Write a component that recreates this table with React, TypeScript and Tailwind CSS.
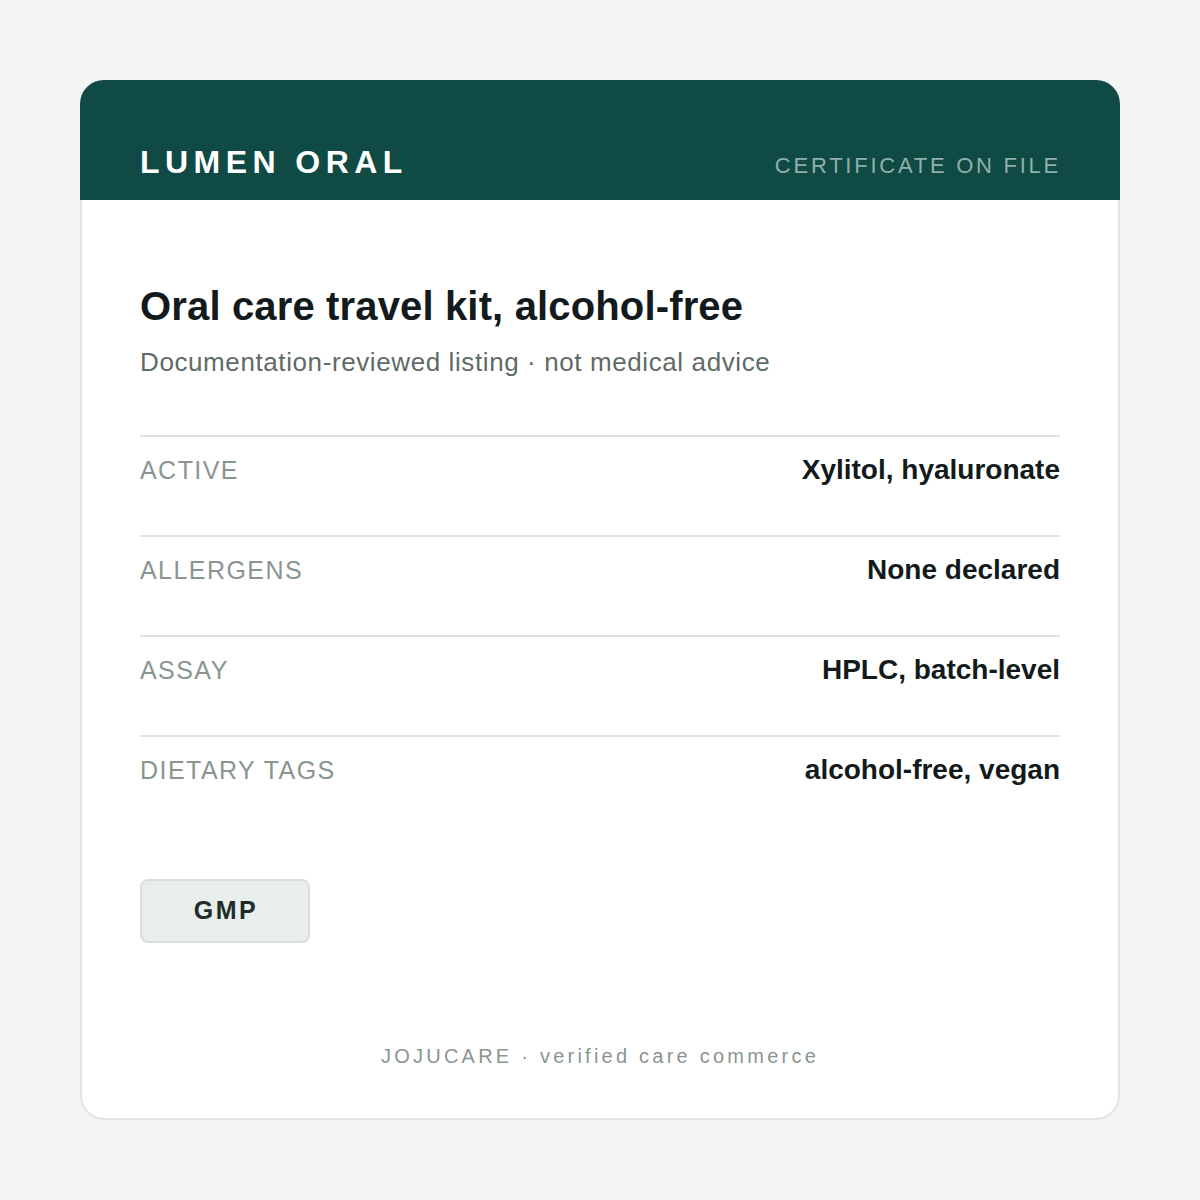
import React from "react";

const rows = [
  { label: "ACTIVE", value: "Xylitol, hyaluronate" },
  { label: "ALLERGENS", value: "None declared" },
  { label: "ASSAY", value: "HPLC, batch-level" },
  { label: "DIETARY TAGS", value: "alcohol-free, vegan" },
];

export default function App() {
  return (
    <div
      className="min-h-[1200px] w-[1200px] bg-[#f4f4f2] p-[80px]"
      style={{ fontFamily: '"Liberation Sans", Arial, sans-serif' }}
    >
      <div className="flex h-[1040px] w-[1040px] flex-col overflow-hidden rounded-[24px]">
        <div className="flex h-[120px] items-baseline justify-between bg-[#0f4a45] px-[60px] pt-[62px]">
          <div className="text-[32px] font-bold leading-[40px] tracking-[0.17em] text-white">
            LUMEN ORAL
          </div>
          <div className="-mr-[1px] text-[22px] leading-[28px] tracking-[0.125em] text-[#8fb0aa]">
            CERTIFICATE ON FILE
          </div>
        </div>
        <div className="flex flex-1 flex-col rounded-b-[24px] border-x-2 border-b-2 border-[#dfe3e1] bg-white px-[58px] pt-[82px]">
          <h1 className="text-[40px] font-bold leading-[48px] tracking-[0.15px] text-[#121a1c]">
            Oral care travel kit, alcohol-free
          </h1>
          <p className="mt-[16px] text-[26px] leading-[32px] tracking-[0.6px] text-[#5f6b66]">
            Documentation-reviewed listing · not medical advice
          </p>
          <div className="mt-[57px] flex flex-col">
            {rows.map((r) => (
              <div
                key={r.label}
                className="flex h-[100px] items-start justify-between border-t-2 border-[#dfe2e0] pt-[18px]"
              >
                <span className="text-[25px] leading-[30px] tracking-[1.45px] text-[#8a9590]">
                  {r.label}
                </span>
                <span className="text-[28px] font-bold leading-[30px] text-[#121a1c]">
                  {r.value}
                </span>
              </div>
            ))}
          </div>
          <div className="mt-[44px] flex">
            <div className="flex h-[64px] w-[170px] items-center justify-center rounded-[8px] border-2 border-[#d8dedb] bg-[#e8eeec] pl-[2px] text-[25px] font-bold tracking-[0.1em] text-[#1f2d2a]">
              GMP
            </div>
          </div>
          <div className="mt-auto pb-[48px] text-center text-[20px] leading-[28px] tracking-[3.24px] text-[#8a9590]">
            JOJUCARE · verified care commerce
          </div>
        </div>
      </div>
    </div>
  );
}
